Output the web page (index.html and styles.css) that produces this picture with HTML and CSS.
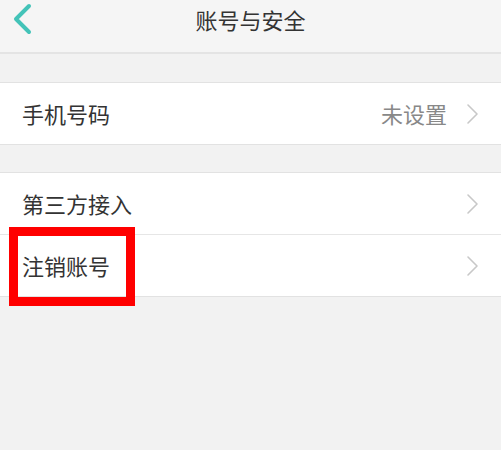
FILE: index.html
```html
<!DOCTYPE html>
<html lang="zh-CN">
<head>
<meta charset="utf-8">
<title>账号与安全</title>
<link rel="stylesheet" href="styles.css">
</head>
<body>
<div class="page">
  <header class="header">
    <div class="back">
      <svg width="24" height="34" viewBox="0 0 24 34">
        <polyline points="16,3 3,16 16,29" fill="none" stroke="#43c3b8" stroke-width="4" stroke-linecap="round" stroke-linejoin="round"/>
      </svg>
    </div>
    <div class="title">账号与安全</div>
    <div></div>
  </header>

  <section class="group">
    <div class="row">
      <span class="label">手机号码</span>
      <span class="value">未设置</span>
      <svg class="chev" width="13" height="22" viewBox="0 0 13 22"><polyline points="2,2 11,11 2,20" fill="none" stroke="#c8c8c8" stroke-width="1.6" stroke-linecap="round" stroke-linejoin="round"/></svg>
    </div>
  </section>

  <section class="group">
    <div class="row">
      <span class="label">第三方接入</span>
      <svg class="chev" width="13" height="22" viewBox="0 0 13 22"><polyline points="2,2 11,11 2,20" fill="none" stroke="#c8c8c8" stroke-width="1.6" stroke-linecap="round" stroke-linejoin="round"/></svg>
    </div>
    <div class="row">
      <span class="label">注销账号</span>
      <svg class="chev" width="13" height="22" viewBox="0 0 13 22"><polyline points="2,2 11,11 2,20" fill="none" stroke="#c8c8c8" stroke-width="1.6" stroke-linecap="round" stroke-linejoin="round"/></svg>
    </div>
  </section>

  <div class="highlight"></div>
</div>
</body>
</html>
```
FILE: styles.css
```css
html, body {
  margin: 0;
  padding: 0;
}
body {
  background: #f2f2f2;
  font-family: "Noto Sans CJK SC", "Noto Sans", sans-serif;
  color: #333333;
}
.page {
  position: relative;
  width: 501px;
  height: 450px;
  overflow: hidden;
}
.header {
  height: 52px;
  background: #f5f5f5;
  border-bottom: 2px solid #e4e4e4;
  display: grid;
  grid-template-columns: 1fr auto 1fr;
  align-items: start;
}
.back {
  padding: 3px 0 0 13px;
  height: 34px;
}
.back svg {
  display: block;
}
.title {
  font-size: 22px;
  line-height: 38px;
  color: #333333;
}
.group {
  margin-top: 28px;
  background: #ffffff;
  border-top: 1px solid #e2e2e2;
  border-bottom: 1px solid #e2e2e2;
}
.group + .group {
  margin-top: 27px;
}
.row {
  height: 61px;
  display: flex;
  align-items: center;
  padding: 0 22px;
}
.row + .row {
  border-top: 1px solid #e6e6e6;
}
.label,
.value {
  line-height: 1;
  padding-bottom: 2px;
}
.label {
  flex: 1;
  font-size: 22px;
  color: #333333;
}
.value {
  font-size: 22px;
  color: #888888;
  margin-right: 19px;
}
.chev {
  display: block;
}
.highlight {
  position: absolute;
  left: 9px;
  top: 227px;
  width: 126px;
  height: 79px;
  box-sizing: border-box;
  border: 9px solid #ff0000;
}
```
